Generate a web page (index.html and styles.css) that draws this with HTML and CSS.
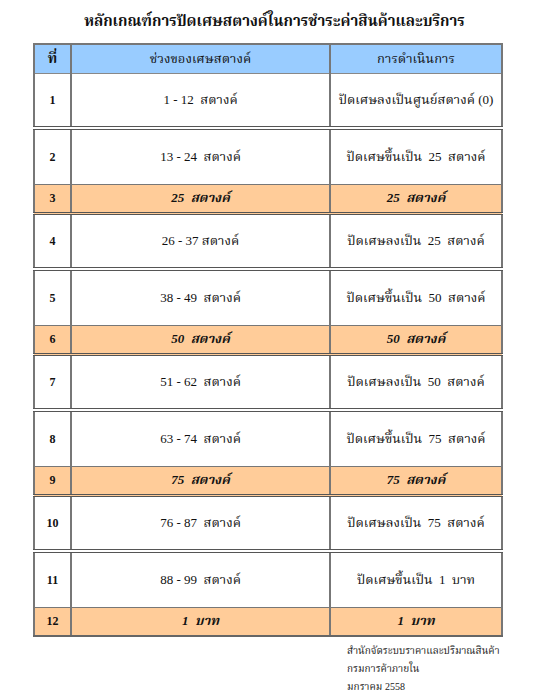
FILE: index.html
```html
<!DOCTYPE html>
<html lang="th">
<head>
<meta charset="utf-8">
<title>หลักเกณฑ์การปัดเศษสตางค์</title>
<link rel="stylesheet" href="styles.css">
</head>
<body>
<h1 class="title">หลักเกณฑ์การปัดเศษสตางค์ในการชำระค่าสินค้าและบริการ</h1>
<table class="grid">
  <colgroup><col class="c1"><col class="c2"><col class="c3"></colgroup>
  <thead>
    <tr class="head"><th class="num">ที่</th><th>ช่วงของเศษสตางค์</th><th>การดำเนินการ</th></tr>
  </thead>
  <tbody>
    <tr class="w"><td class="num">1</td><td>1 - 12&nbsp; สตางค์</td><td>ปัดเศษลงเป็นศูนย์สตางค์ (0)</td></tr>
    <tr class="w pre"><td class="num">2</td><td>13 - 24&nbsp; สตางค์</td><td>ปัดเศษขึ้นเป็น&nbsp; 25&nbsp; สตางค์</td></tr>
    <tr class="o"><td class="num">3</td><td>25&nbsp; สตางค์</td><td>25&nbsp; สตางค์</td></tr>
    <tr class="w"><td class="num">4</td><td>26 - 37 สตางค์</td><td>ปัดเศษลงเป็น&nbsp; 25&nbsp; สตางค์</td></tr>
    <tr class="w pre"><td class="num">5</td><td>38 - 49&nbsp; สตางค์</td><td>ปัดเศษขึ้นเป็น&nbsp; 50&nbsp; สตางค์</td></tr>
    <tr class="o"><td class="num">6</td><td>50&nbsp; สตางค์</td><td>50&nbsp; สตางค์</td></tr>
    <tr class="w"><td class="num">7</td><td>51 - 62&nbsp; สตางค์</td><td>ปัดเศษลงเป็น&nbsp; 50&nbsp; สตางค์</td></tr>
    <tr class="w pre"><td class="num">8</td><td>63 - 74&nbsp; สตางค์</td><td>ปัดเศษขึ้นเป็น&nbsp; 75&nbsp; สตางค์</td></tr>
    <tr class="o"><td class="num">9</td><td>75&nbsp; สตางค์</td><td>75&nbsp; สตางค์</td></tr>
    <tr class="w"><td class="num">10</td><td>76 - 87&nbsp; สตางค์</td><td>ปัดเศษลงเป็น&nbsp; 75&nbsp; สตางค์</td></tr>
    <tr class="w pre"><td class="num">11</td><td>88 - 99&nbsp; สตางค์</td><td>ปัดเศษขึ้นเป็น&nbsp; 1&nbsp; บาท</td></tr>
    <tr class="o last"><td class="num">12</td><td>1&nbsp; บาท</td><td>1&nbsp; บาท</td></tr>
  </tbody>
</table>
<div class="note">
  <p>สำนักจัดระบบราคาและปริมาณสินค้า</p>
  <p>กรมการค้าภายใน</p>
  <p>มกราคม 2558</p>
</div>
</body>
</html>
```
FILE: styles.css
```css
html, body {
  margin: 0;
  padding: 0;
  background: #ffffff;
}
body {
  font-family: "Liberation Serif", "Noto Serif Thai", "Noto Sans Thai", serif;
  color: #111;
  width: 549px;
}
.title {
  margin: 0;
  height: 43px;
  line-height: 42px;
  font-size: 15px;
  font-weight: bold;
  text-align: center;
  color: #111;
}
.grid {
  margin-left: 33px;
  width: 468px;
  border-collapse: collapse;
  table-layout: fixed;
  border: 2px solid #777;
}
.c1 { width: 37px; }
.c2 { width: 259px; }
.c3 { width: 172px; }
.grid th, .grid td {
  padding: 0;
  text-align: center;
  border-left: 2px solid #777;
  border-right: 2px solid #777;
  font-size: 13px;
}
.head th {
  height: 28px;
  background: #99ccff;
  font-weight: normal;
  border-bottom: 1px solid #888;
}
.head th.num { font-weight: bold; font-size: 14px; }
.w td {
  height: 52px;
  background: #fff;
  border-bottom: 4px double #555;
}
.w.pre td {
  height: 54px;
  border-bottom: 1px solid #777;
}
.o td {
  height: 27px;
  background: #ffcc99;
  font-weight: bold;
  font-style: italic;
  border-bottom: 3px double #555;
}
.o.last td { border-bottom: 2px solid #666; }
.grid td.num {
  font-weight: bold;
  font-style: normal;
  font-size: 12px;
}
.note {
  margin: 5px 0 0 347px;
  font-size: 10px;
  color: #222;
}
.note p {
  margin: 0;
  line-height: 18px;
}
```
